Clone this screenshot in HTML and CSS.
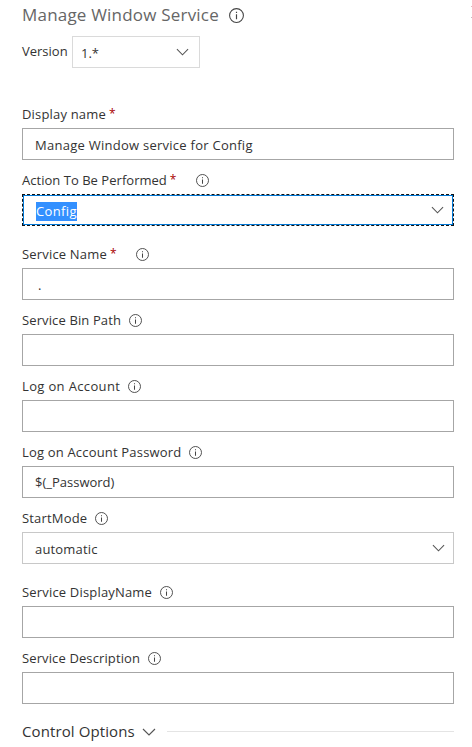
FILE: index.html
```
<!DOCTYPE html>
<html lang="en">
<head>
<meta charset="utf-8">
<title>Manage Window Service</title>
<link rel="stylesheet" href="styles.css">
</head>
<body>
<svg class="defs" aria-hidden="true">
  <symbol id="info" viewBox="0 0 14 14"><circle cx="7" cy="7" r="6.45" fill="none" stroke="currentColor" stroke-width="1"/><path d="M7 5.8V10.6M7 3.4V4.7" fill="none" stroke="currentColor" stroke-width="1.1"/></symbol>
  <symbol id="chevron" viewBox="0 0 14 8"><path d="M1 1L7 7L13 1" fill="none" stroke="currentColor" stroke-width="1.15"/></symbol>
</svg>
<div class="edge-marks"></div>
<main class="panel">
  <header class="title"><h1>Manage Window Service</h1><svg class="info large"><use href="#info"/></svg></header>
  <div class="version"><span>Version</span><div class="version-select"><span>1.*</span><svg class="chevron"><use href="#chevron"/></svg></div></div>

  <section class="field">
    <div class="label"><span class="wide">Display name</span><span class="required">*</span></div>
    <div class="box"><span class="wider">Manage Window service for Config</span></div>
  </section>
  <section class="field select">
    <div class="label"><span class="tight">Action To Be Performed</span><span class="required">*</span><svg class="info"><use href="#info"/></svg></div>
    <div class="box focused"><div class="focus-inner"><span class="selection">Config</span><svg class="chevron"><use href="#chevron"/></svg></div></div>
  </section>
  <section class="field">
    <div class="label"><span class="wide">Service Name</span><span class="required">*</span><svg class="info"><use href="#info"/></svg></div>
    <div class="box"><span class="dot">.</span></div>
  </section>
  <section class="field">
    <div class="label"><span class="normal">Service Bin Path</span><svg class="info"><use href="#info"/></svg></div>
    <div class="box"></div>
  </section>
  <section class="field">
    <div class="label"><span class="widest">Log on Account</span><svg class="info"><use href="#info"/></svg></div>
    <div class="box"></div>
  </section>
  <section class="field">
    <div class="label"><span class="wide">Log on Account Password</span><svg class="info"><use href="#info"/></svg></div>
    <div class="box raised"><span>$(_Password)</span></div>
  </section>
  <section class="field select">
    <div class="label"><span class="wide">StartMode</span><svg class="info"><use href="#info"/></svg></div>
    <div class="box light"><span class="wide">automatic</span><svg class="chevron"><use href="#chevron"/></svg></div>
  </section>
  <section class="field">
    <div class="label"><span class="wide">Service DisplayName</span><svg class="info"><use href="#info"/></svg></div>
    <div class="box"></div>
  </section>
  <section class="field">
    <div class="label"><span class="normal">Service Description</span><svg class="info"><use href="#info"/></svg></div>
    <div class="box"></div>
  </section>
  <footer class="options"><h2>Control Options</h2><svg class="chevron"><use href="#chevron"/></svg><span class="rule"></span></footer>
</main>
</body>
</html>
```
FILE: styles.css
```
* { box-sizing: border-box; }
body { margin: 0; background: #fff; color: #333; font: 13px/18px "Open Sans", "Noto Sans", sans-serif; overflow: hidden; }
h1, h2 { margin: 0; font-weight: 400; }
.defs { position: absolute; width: 0; height: 0; }
.edge-marks { position: absolute; top: 6px; right: 0; width: 1px; height: 12px; border-top: 1px solid #e8b4bc; border-bottom: 1px solid #c8b8c0; }
.panel { width: 454px; padding-left: 22px; white-space: nowrap; }
.title { display: flex; align-items: center; height: 30px; margin-bottom: 6px; }
.title h1 { color: #666; font-size: 17px; line-height: 24px; letter-spacing: .2px; }
.info { flex: none; width: 13px; height: 13px; margin-left: 7.5px; color: #444; }
.info.large { width: 15px; height: 15px; margin-left: 10px; }
.version { display: flex; align-items: center; height: 32px; margin-bottom: 32px; }
.version > span { width: 50px; padding-bottom: 2px; }
.version-select { display: flex; align-items: center; justify-content: space-between; width: 128px; height: 32px; padding: 2px 10px 0 8px; border: 1px solid #dadada; }
.version-select .chevron { margin-top: -2px; }
.chevron { flex: none; width: 13px; height: 8px; color: #555; }
.field { margin-bottom: 6px; }
.field.select { margin-bottom: 14px; }
.label { display: flex; align-items: center; height: 28px; }
.required { width: 7px; margin-left: 3px; color: #a80000; font-size: 12px; }
.required + .info { margin-left: 19.5px; }
.box { display: flex; align-items: center; justify-content: space-between; height: 32px; padding: 2px 8px 0 12px; border: 1px solid #a6a6a6; }
.box.raised { padding-top: 0; }
.box.light { border-color: #c8c8c8; }
.box.light .chevron { margin-top: -2px; }
.box.focused { padding: 0; border: 1px dashed #111; }
.focus-inner { display: flex; flex: 1; align-items: center; justify-content: space-between; height: 30px; padding: 2px 8px 0 12px; border: 1px solid #0078d7; }
.focus-inner .chevron { margin-top: -2px; }
.selection { height: 19px; line-height: 19px; background: #3390ff; color: #fff; letter-spacing: .38px; }
.dot { padding-left: 3px; }
.tight { letter-spacing: .03px; }
.normal { letter-spacing: .12px; }
.wide { letter-spacing: .18px; }
.wider { letter-spacing: .26px; }
.widest { letter-spacing: .35px; }
.options { display: flex; align-items: center; height: 30px; margin-top: 12px; }
.options h2 { font-size: 15px; line-height: 20px; letter-spacing: .1px; }
.options .chevron { width: 14px; height: 8px; margin: 2px 0 0 7px; }
.rule { flex: 1; height: 1px; margin-left: 11px; background: #e4e4e4; }
```
